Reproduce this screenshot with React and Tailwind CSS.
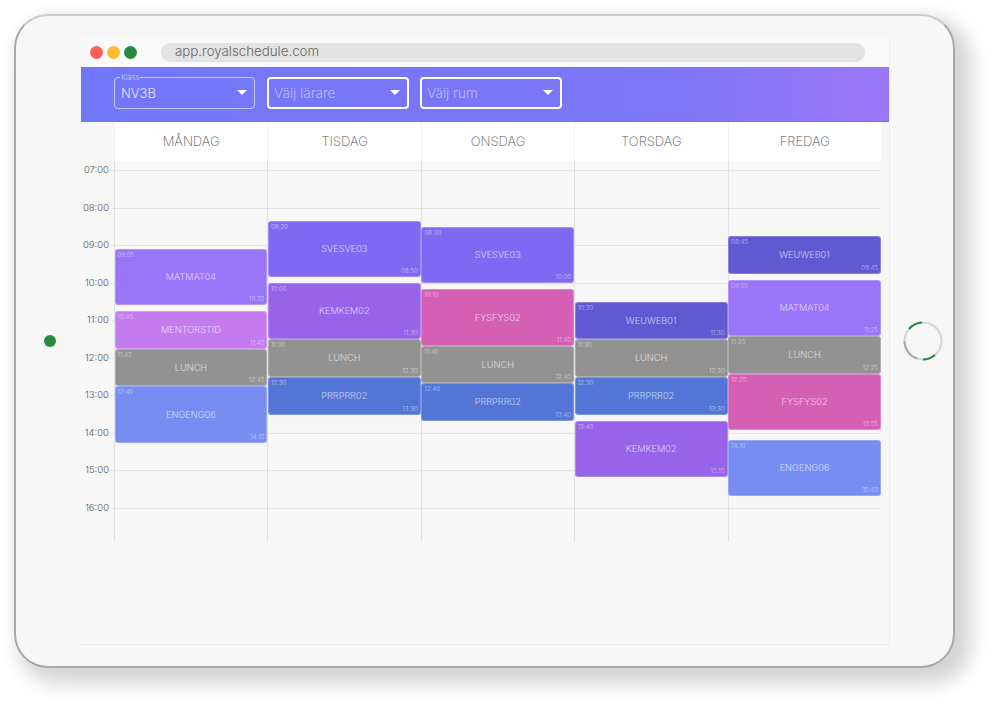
const HOUR = 37.55
const hours = ['07:00', '08:00', '09:00', '10:00', '11:00', '12:00', '13:00', '14:00', '15:00', '16:00']

const colors = {
  MATMAT04: 'bg-[#9875f9]',
  MENTORSTID: 'bg-[#c47bf0]',
  LUNCH: 'bg-[#929292]',
  ENGENG06: 'bg-[#788df2]',
  SVESVE03: 'bg-[#7f69f2]',
  KEMKEM02: 'bg-[#9763e8]',
  PRRPRR02: 'bg-[#5275d6]',
  FYSFYS02: 'bg-[#d45fb4]',
  WEUWEB01: 'bg-[#6059d2]',
}

const days = [
  {
    name: 'MÅNDAG',
    events: [
      ['MATMAT04', '09:05', '10:35'],
      ['MENTORSTID', '10:45', '11:45'],
      ['LUNCH', '11:45', '12:45'],
      ['ENGENG06', '12:45', '14:15'],
    ],
  },
  {
    name: 'TISDAG',
    events: [
      ['SVESVE03', '08:20', '09:50'],
      ['KEMKEM02', '10:00', '11:30'],
      ['LUNCH', '11:30', '12:30'],
      ['PRRPRR02', '12:30', '13:30'],
    ],
  },
  {
    name: 'ONSDAG',
    events: [
      ['SVESVE03', '08:30', '10:00'],
      ['FYSFYS02', '10:10', '11:40'],
      ['LUNCH', '11:40', '12:40'],
      ['PRRPRR02', '12:40', '13:40'],
    ],
  },
  {
    name: 'TORSDAG',
    events: [
      ['WEUWEB01', '10:30', '11:30'],
      ['LUNCH', '11:30', '12:30'],
      ['PRRPRR02', '12:30', '13:30'],
      ['KEMKEM02', '13:40', '15:10'],
    ],
  },
  {
    name: 'FREDAG',
    events: [
      ['WEUWEB01', '08:45', '09:45'],
      ['MATMAT04', '09:55', '11:25'],
      ['LUNCH', '11:25', '12:25'],
      ['FYSFYS02', '12:25', '13:55'],
      ['ENGENG06', '14:10', '15:40'],
    ],
  },
]

function toY(time) {
  const [h, m] = time.split(':').map(Number)
  return 8.5 + (h - 7 + m / 60) * HOUR
}

function Select({ value, label, strong }) {
  return (
    <div
      className={`relative flex h-[32px] items-center justify-between rounded-[4px] pr-[7px] font-light ${
        strong
          ? 'w-[142px] border-2 border-white pl-[5px] text-[13.5px] text-white/50'
          : 'mr-px w-[141px] border border-white/60 pl-[6px] text-[13px] text-white/80'
      }`}
    >
      {label && (
        <span className="absolute left-[5px] top-[-5px] bg-[#7276f8] px-[1px] text-[7.5px] leading-[9px] text-white/70">
          {label}
        </span>
      )}
      <span className="pt-[2px]">{value}</span>
      <span className="h-0 w-0 border-x-[5px] border-t-[5px] border-x-transparent border-t-white" />
    </div>
  )
}

function Event({ title, start, end }) {
  const top = toY(start)
  const height = toY(end) - top
  return (
    <div
      className={`absolute left-[-0.5px] right-0 flex items-center justify-center rounded-[3px] border border-white/25 text-[9.2px] font-light text-white/65 ${colors[title]}`}
      style={{ top, height }}
    >
      <span className="absolute left-[2px] top-[1px] text-[6.2px] leading-[8px] text-white/55">{start}</span>
      {title}
      <span className="absolute bottom-[1px] right-[2px] text-[6.2px] leading-[8px] text-white/60">{end}</span>
    </div>
  )
}

function Schedule() {
  return (
    <div className="relative h-[380px] pt-[8px] pr-[8px]">
      {hours.map((hour) => (
        <div key={hour} className="flex h-[37.55px] items-start">
          <span className="-mt-[6px] w-[28px] text-right text-[9.5px] font-light leading-[12px] text-[#555]">{hour}</span>
          <div className="ml-[2px] h-px flex-1 bg-[#e4e4e4]" />
        </div>
      ))}
      <div className="absolute bottom-0 left-[33px] right-[8px] top-0 grid grid-cols-5">
        {days.map((day) => (
          <div key={day.name} className="relative border-l border-[#e0e0e0]">
            {day.events.map(([title, start, end]) => (
              <Event key={title + start} title={title} start={start} end={end} />
            ))}
          </div>
        ))}
      </div>
    </div>
  )
}

export default function App() {
  return (
    <div
      className="h-[714px] w-[1001px] overflow-hidden bg-white pl-[14px] pt-[14px]"
      style={{ fontFamily: 'Inter, "Liberation Sans", sans-serif' }}
    >
      <div className="flex h-[654px] w-[941px] items-start rounded-[34px] border-2 border-[#a8a8a8] border-t-[#cdcdcd] bg-[#f7f7f7] shadow-[10px_10px_18px_6px_rgba(0,0,0,0.17)]">
        <div className="ml-[28px] mt-[319px] h-[12px] w-[12px] rounded-full bg-[#2a8a3e]" />

        <div className="ml-[25px] mt-[21px] h-[608px] w-[809px] border-b border-r border-[#ececec]">
          <div className="flex h-[30px] items-center bg-[#f9f9f9]">
            <span className="ml-[9px] h-[13px] w-[13px] rounded-full bg-[#ff5f57]" />
            <span className="ml-[4px] h-[13px] w-[13px] rounded-full bg-[#febc2e]" />
            <span className="ml-[4px] h-[13px] w-[13px] rounded-full bg-[#2a8a3e]" />
            <div className="ml-[24px] flex h-[19px] w-[704px] items-center rounded-full bg-[#e3e3e3] pb-px pl-[14px] text-[13.3px] font-light text-[#666]">
              app.royalschedule.com
            </div>
          </div>

          <div className="flex h-[55px] items-center gap-[11px] border-b border-[#807f85] bg-gradient-to-r from-[#7276f8] via-[#7c76f8] via-[70%] to-[#9b76f8] pb-[3px] pl-[33px]">
            <Select value="NV3B" label="Klass" />
            <Select value="Välj lärare" strong />
            <Select value="Välj rum" strong />
          </div>

          <div className="ml-[33px] mr-[8px] grid h-[40px] grid-cols-5 bg-white">
            {days.map((day) => (
              <div
                key={day.name}
                className="flex items-center justify-center border-l border-[#f3f3f3] text-[13px] font-extralight text-[#555]"
              >
                {day.name}
              </div>
            ))}
          </div>

          <Schedule />
        </div>

        <svg className="ml-[13px] mt-[305px]" width="40" height="40" viewBox="0 0 40 40" fill="none">
          <circle cx="20" cy="20" r="18.5" stroke="#d4d4d4" strokeWidth="2" />
          <path d="M1.5 20 A18.5 18.5 0 0 0 14 37.5" stroke="#a8a8a8" strokeWidth="2" />
          <path d="M6 8 A18.5 18.5 0 0 1 19 1.5" stroke="#2a8a3e" strokeWidth="2" />
          <path d="M20 38.5 A18.5 18.5 0 0 0 32 34" stroke="#2a8a3e" strokeWidth="2" />
        </svg>
      </div>
    </div>
  )
}
